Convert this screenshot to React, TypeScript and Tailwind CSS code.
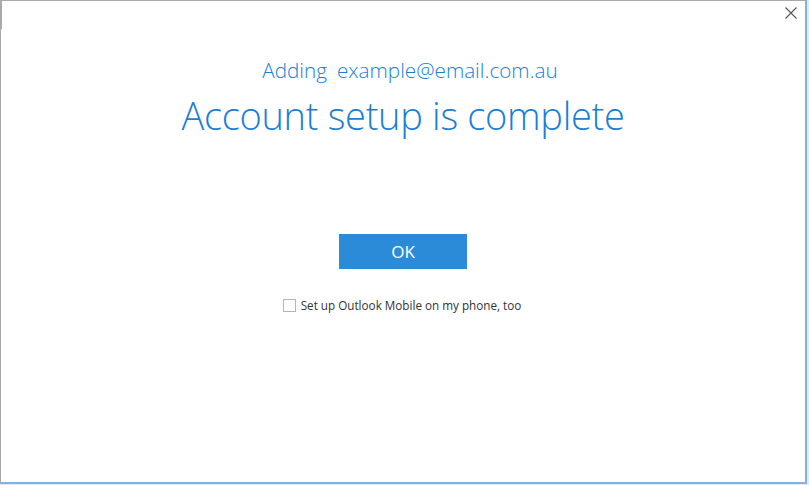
import React from "react";

export default function App() {
  return (
    <div className="w-[809px] h-[485px] bg-[#e9e9e9] overflow-hidden" style={{ fontFamily: '"Open Sans", "Noto Sans", sans-serif' }}>
      <div className="relative w-[807px] h-[484px] border-t border-l border-[#a9a9a9] bg-white">
        <div className="absolute left-0 top-0 w-px h-[28px] bg-[#7fb2e5]" />
        <div className="w-full h-full border-r-2 border-b-2 border-[#7fb2e5] flex flex-col items-center">
          <div className="w-full flex justify-end pr-[8px] pt-[6px] h-[20px]">
            <svg width="12" height="12" viewBox="0 0 12 12">
              <path d="M0.5 0.5 L11.5 11.5 M11.5 0.5 L0.5 11.5" stroke="#555" strokeWidth="1.1" fill="none" />
            </svg>
          </div>
          <div className="mt-[36px] ml-[14px] text-[20.7px] leading-[26px] text-[#1a7fd4] font-light flex">
            <span>Adding</span>
            <span className="ml-[10px]">example@email.com.au</span>
          </div>
          <div className="mt-[9px] text-[38px] leading-[46px] text-[#1a7fd4] font-light tracking-[-0.3px]">
            Account setup is complete
          </div>
          <button className="mt-[96px] w-[128px] h-[35px] bg-[#2b8bd9] text-white text-[17px] font-normal flex items-center justify-center">
            OK
          </button>
          <label className="mt-[28px] flex items-center gap-[5px] text-[11.7px] text-[#333] ml-[-2px]">
            <span className="w-[13px] h-[13px] border border-[#b5b5b5] bg-white inline-block" />
            <span>Set up Outlook Mobile on my phone, too</span>
          </label>
        </div>
      </div>
    </div>
  );
}
